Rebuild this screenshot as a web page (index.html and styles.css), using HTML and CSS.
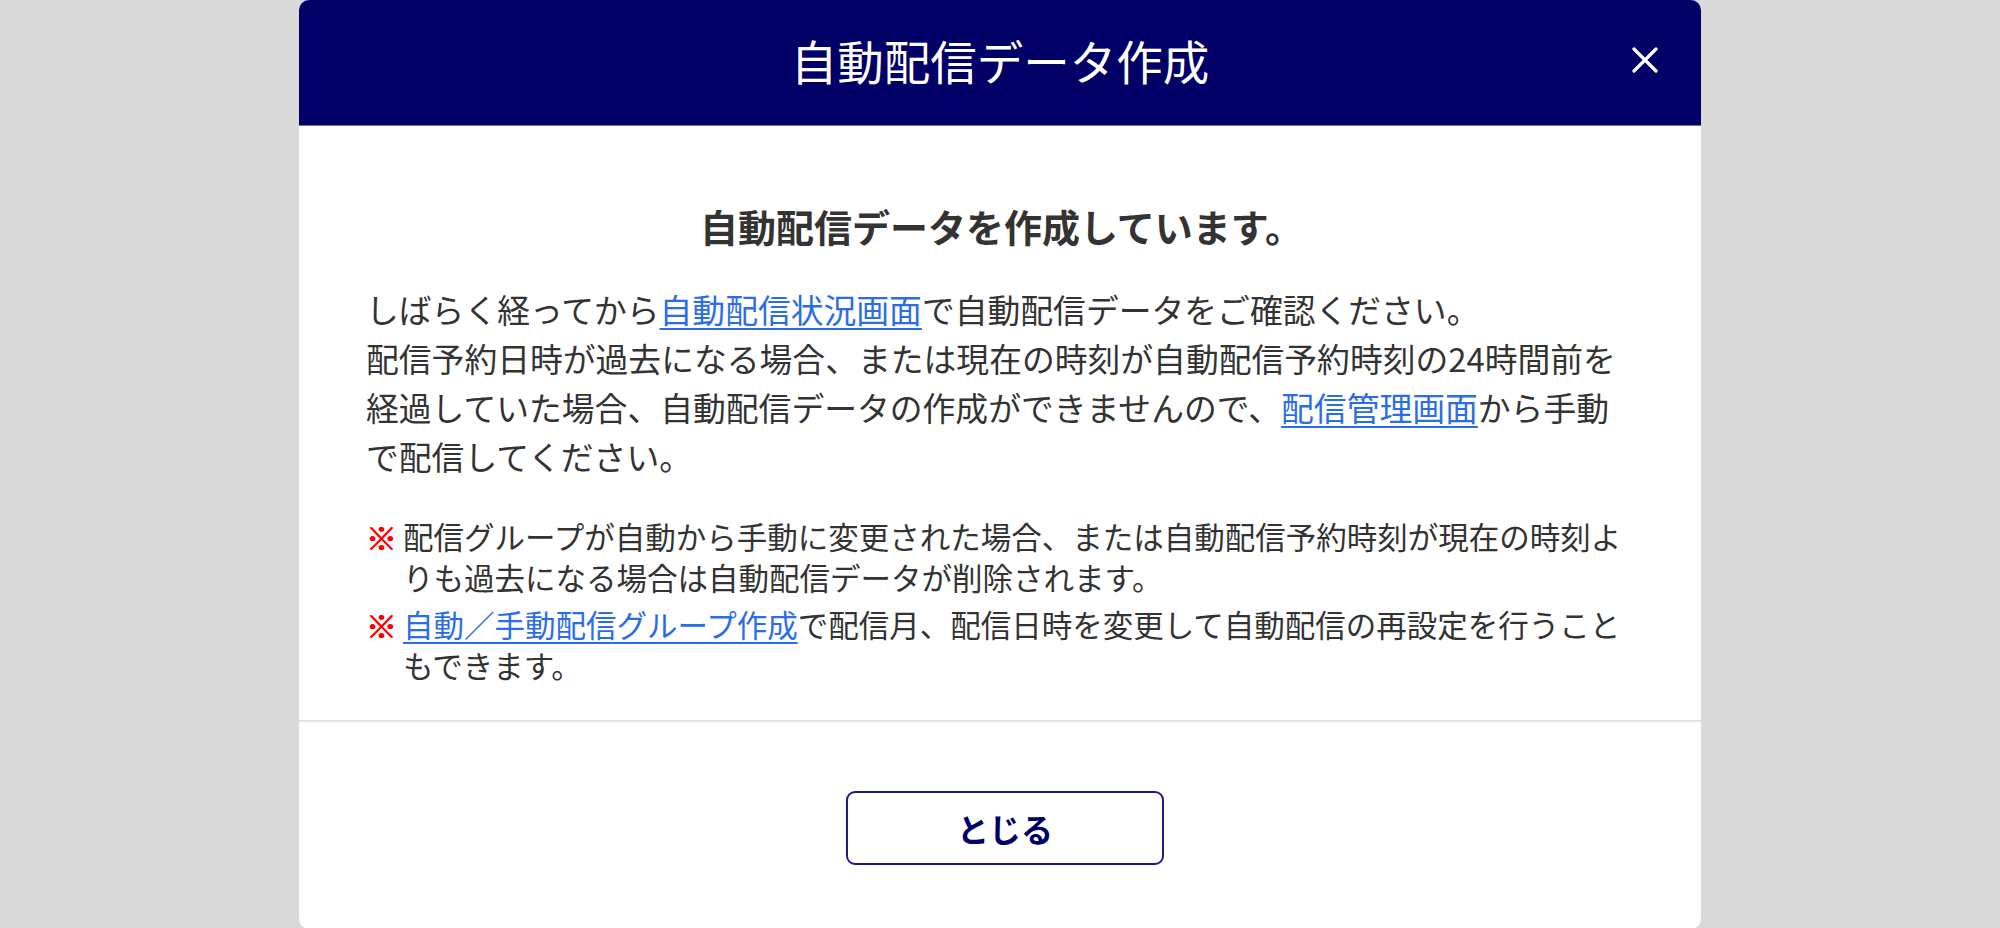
FILE: index.html
```html
<!DOCTYPE html>
<html lang="ja">
<head>
<meta charset="utf-8">
<title>自動配信データ作成</title>
<link rel="stylesheet" href="styles.css">
</head>
<body>
<div class="modal">
  <header class="modal-header">
    <span class="spacer"></span>
    <h1 class="modal-title">自動配信データ作成</h1>
    <button class="close-btn" aria-label="閉じる">
      <svg width="26" height="26" viewBox="0 0 26 26"><path d="M2 2 L24 24 M24 2 L2 24" stroke="#fff" stroke-width="3.2" stroke-linecap="round" fill="none"/></svg>
    </button>
  </header>
  <section class="modal-body">
    <h2 class="lead">自動配信データを作成しています。</h2>
    <p class="message">しばらく経ってから<a href="#" class="link">自動配信状況画面</a>で自動配信データをご確認ください。<br>配信予約日時が過去になる場合、または現在の時刻が自動配信予約時刻の24時間前を経過していた場合、自動配信データの作成ができませんので、<a href="#" class="link">配信管理画面</a>から手動で配信してください。</p>
    <ul class="notes">
      <li class="note"><span class="mark">※</span><span class="note-text">配信グループが自動から手動に変更された場合、または自動配信予約時刻が現在の時刻よりも過去になる場合は自動配信データが削除されます。</span></li>
      <li class="note"><span class="mark">※</span><span class="note-text"><a href="#" class="link">自動／手動配信グループ作成</a>で配信月、配信日時を変更して自動配信の再設定を行うこともできます。</span></li>
    </ul>
  </section>
  <footer class="modal-footer">
    <button class="btn-close">とじる</button>
  </footer>
</div>
</body>
</html>
```

FILE: styles.css
```css
* { box-sizing: border-box; }
html, body {
  margin: 0;
  padding: 0;
  background: #d9d9d9;
  font-family: "Noto Sans CJK JP", "Noto Sans", sans-serif;
  color: #333;
}
.modal {
  width: 1402px;
  margin: 0 auto;
  background: #fff;
  border-radius: 10px;
  overflow: hidden;
}
.modal-header {
  height: 126px;
  background: #000066;
  border-bottom: 1px solid #7272b0;
  display: grid;
  grid-template-columns: 1fr auto 1fr;
  align-items: center;
}
.modal-title {
  margin: 0;
  font-size: 46.5px;
  font-weight: 400;
  color: #fff;
  line-height: 1;
  padding-bottom: 4px;
}
.close-btn {
  justify-self: end;
  margin-right: 43px;
  margin-bottom: 5px;
  width: 26px;
  height: 26px;
  padding: 0;
  border: 0;
  background: transparent;
  display: flex;
}
.modal-body {
  padding: 72px 70px 34px 67px;
}
.lead {
  margin: 0;
  text-align: center;
  font-size: 38px;
  line-height: 56px;
  font-weight: 700;
  color: #333;
  padding-left: 6px;
}
.message {
  margin: 30px 0 0;
  padding-right: 8px;
  font-size: 32.8px;
  line-height: 49px;
  color: #333;
}
.link {
  color: #2b6de8;
  text-decoration: underline;
  text-underline-offset: 5px;
  text-decoration-thickness: 2px;
}
.notes {
  list-style: none;
  margin: 36px 0 0;
  padding: 0;
  display: flex;
  flex-direction: column;
  gap: 6px;
}
.note {
  display: flex;
  font-size: 30.5px;
  line-height: 41px;
  color: #333;
}
.mark {
  flex: 0 0 37px;
  color: #ff0000;
  font-weight: 700;
  font-size: 31px;
  text-shadow: 0.6px 0 0 #ff0000, -0.4px 0 0 #ff0000;
}
.note-text { flex: 1; }
.modal-footer {
  border-top: 2px solid #e2e2e2;
  padding: 69px 0 64px;
  display: flex;
  justify-content: center;
}
.btn-close {
  width: 318px;
  height: 74px;
  margin-left: 10px;
  border: 2px solid #1c1c80;
  border-radius: 9px;
  background: #fff;
  color: #000066;
  font-family: "Noto Sans CJK JP", "Noto Sans", sans-serif;
  font-size: 32px;
  font-weight: 700;
}
```
